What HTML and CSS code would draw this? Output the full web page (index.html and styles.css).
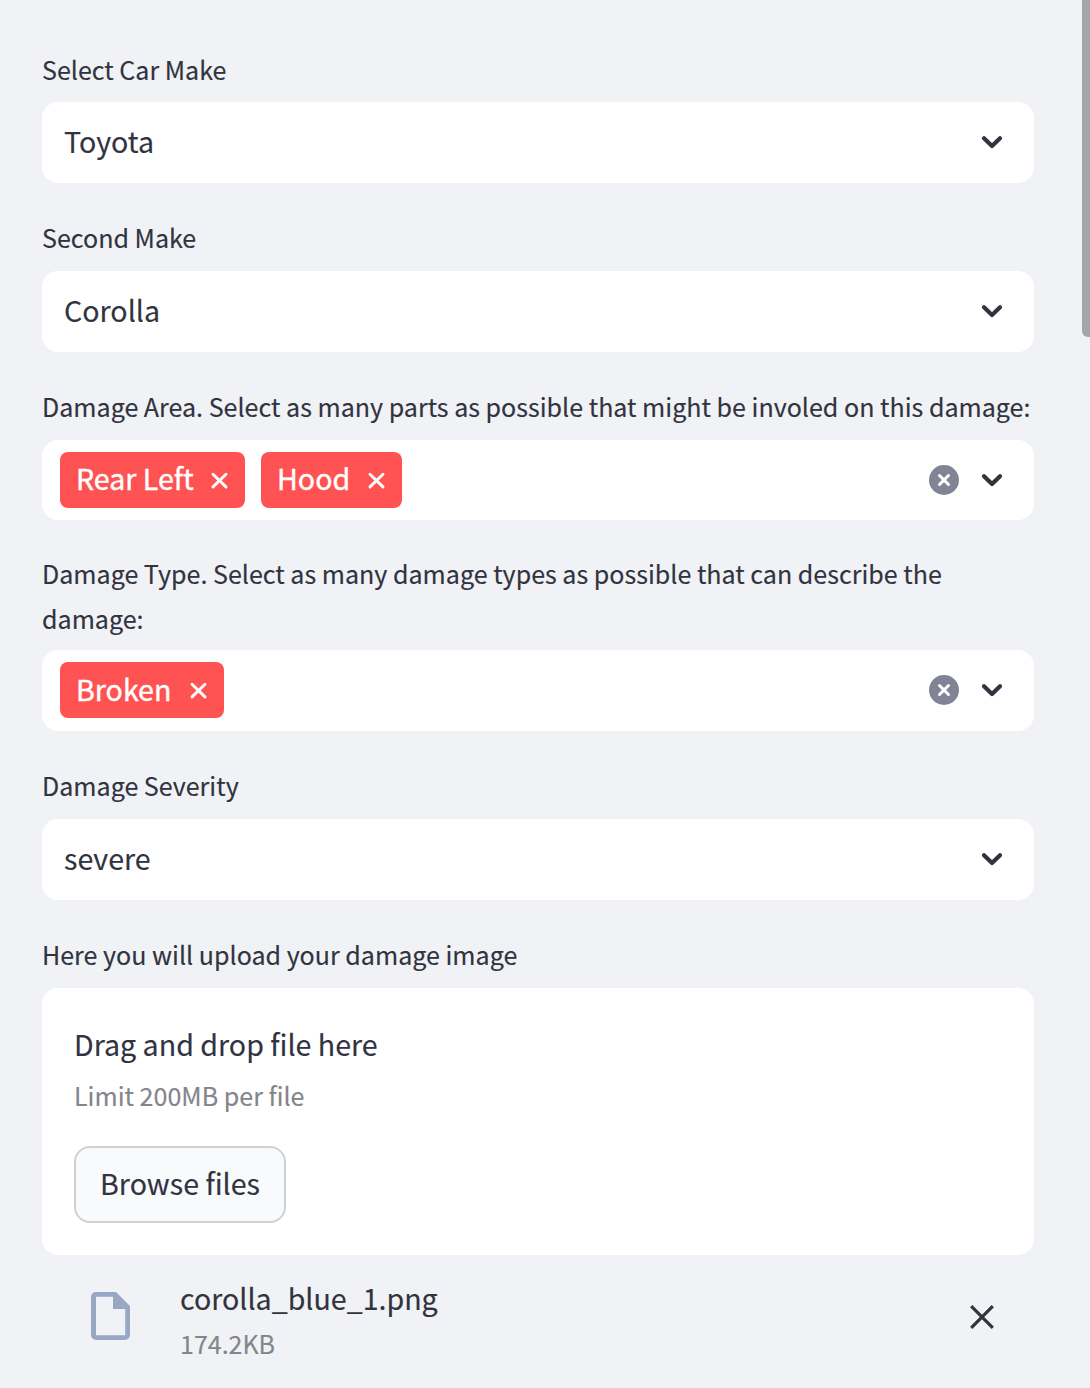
FILE: index.html
```html
<!DOCTYPE html>
<html lang="en">
<head>
<meta charset="utf-8">
<title>Damage report</title>
<link rel="stylesheet" href="styles.css">
</head>
<body>
<svg class="defs" width="0" height="0" aria-hidden="true">
  <symbol id="chevron" viewBox="0 0 32 32"><path d="M8 12.2l8 7.8 8-7.8" fill="none" stroke="currentColor" stroke-width="4.2" stroke-linecap="round" stroke-linejoin="round"/></symbol>
  <symbol id="cross" viewBox="0 0 20 20"><path d="M4 4.3l13 12.6M17 4.3l-13 12.6" fill="none" stroke="currentColor" stroke-width="2.9" stroke-linecap="round"/></symbol>
  <symbol id="clear" viewBox="0 0 30 30"><circle cx="15" cy="15" r="15" fill="#808495"/><path d="M10.5 10.5l9 9M19.5 10.5l-9 9" stroke="#fff" stroke-width="3" stroke-linecap="round"/></symbol>
</svg>
<main class="sidebar">
  <form class="form">
    <div class="field">
      <div class="label"><span class="label-text">Select Car Make</span></div>
      <div class="select"><span class="value">Toyota</span><svg class="chevron"><use href="#chevron"/></svg></div>
    </div>
    <div class="field">
      <div class="label"><span class="label-text">Second Make</span></div>
      <div class="select"><span class="value">Corolla</span><svg class="chevron"><use href="#chevron"/></svg></div>
    </div>
    <div class="field">
      <div class="label"><span class="label-text">Damage Area. Select as many parts as possible that might be involed on this damage:</span></div>
      <div class="select multi">
        <div class="tags">
          <span class="tag tag-rear"><span class="tag-text">Rear Left</span><svg class="tag-x"><use href="#cross"/></svg></span>
          <span class="tag tag-hood"><span class="tag-text">Hood</span><svg class="tag-x"><use href="#cross"/></svg></span>
        </div>
        <svg class="clear"><use href="#clear"/></svg><svg class="chevron"><use href="#chevron"/></svg>
      </div>
    </div>
    <div class="field">
      <div class="label label-long"><span class="label-text">Damage Type. Select as many damage types as possible that can describe the<br>damage:</span></div>
      <div class="select">
        <div class="tags">
          <span class="tag tag-broken"><span class="tag-text">Broken</span><svg class="tag-x"><use href="#cross"/></svg></span>
        </div>
        <svg class="clear"><use href="#clear"/></svg><svg class="chevron"><use href="#chevron"/></svg>
      </div>
    </div>
    <div class="field">
      <div class="label"><span class="label-text">Damage Severity</span></div>
      <div class="select"><span class="value">severe</span><svg class="chevron"><use href="#chevron"/></svg></div>
    </div>
    <div class="field">
      <div class="label"><span class="label-text">Here you will upload your damage image</span></div>
      <div class="dropzone">
        <div class="drop-title">Drag and drop file here</div>
        <div class="drop-hint">Limit 200MB per file</div>
        <button class="browse" type="button">Browse files</button>
      </div>
      <div class="file">
        <svg class="file-icon" viewBox="0 0 40 48"><path fill="#98a7c3" fill-rule="evenodd" d="M5 0H25L39 14V43a5 5 0 0 1-5 5H5a5 5 0 0 1-5-5V5a5 5 0 0 1 5-5zM5 4.8V43.3H34.2V17H22V4.8z"/></svg>
        <div class="file-info">
          <div class="file-name">corolla_blue_1.png</div>
          <div class="file-size">174.2KB</div>
        </div>
        <svg class="remove" viewBox="0 0 24 24"><path d="M1.2 1.2l21.6 21.6M22.8 1.2L1.2 22.8" stroke="currentColor" stroke-width="3.2"/></svg>
      </div>
    </div>
  </form>
  <div class="scrollbar"></div>
</main>
</body>
</html>
```
FILE: styles.css
```css
* { box-sizing: border-box; }
body {
  margin: 0;
  background: #f0f2f6;
  color: #31333f;
  font-family: "Noto Sans CJK SC", "Noto Sans", sans-serif;
  font-size: 28.6px;
  -webkit-text-stroke: 0.15px currentColor;
}
.defs { position: absolute; }
.sidebar {
  display: flex;
  justify-content: space-between;
  height: 1388px;
  overflow: hidden;
}
.form {
  display: flex;
  flex-direction: column;
  gap: 30px;
  width: 1034px;
  padding: 44px 0 0 42px;
}
.label {
  display: flex;
  align-items: center;
  min-height: 58px;
  padding-bottom: 10px;
  font-size: 25.06px;
  line-height: 45px;
  white-space: nowrap;
}
.field:first-child .label { padding-bottom: 8px; }
.label-long { padding: 1px 0 9px; }
.select {
  display: flex;
  align-items: center;
  height: 81px;
  padding: 0 26px 1px 18px;
  background: #fff;
  border-radius: 16px;
}
.multi { height: 80px; padding-bottom: 0; }
.value { flex: 1; padding: 0 0 3px 4px; line-height: 45px; }
.tags { display: flex; flex: 1; gap: 16px; }
.tag {
  display: flex;
  align-items: center;
  justify-content: space-between;
  height: 56px;
  padding: 0 16px;
  background: #ff5252;
  border-radius: 8px;
  color: #fff;
  line-height: 45px;
  white-space: nowrap;
  -webkit-text-stroke: 0.4px currentColor;
}
.tag-text { padding-bottom: 5px; }
.tag-rear { width: 185px; }
.tag-hood { width: 141px; }
.tag-broken { width: 164px; }
.tag-broken .tag-text { padding-bottom: 3px; }
.tag-x { width: 20px; height: 20px; flex: none; }
.clear { width: 30px; height: 30px; margin-right: 17px; }
.chevron { width: 32px; height: 32px; }
.dropzone {
  display: flex;
  flex-direction: column;
  align-items: flex-start;
  height: 267px;
  padding: 32px;
  background: #fff;
  border-radius: 16px;
}
.drop-title { height: 54px; line-height: 48px; }
.drop-hint { height: 72px; font-size: 25.05px; line-height: 43px; color: #83858c; }
.browse {
  width: 212px;
  height: 77px;
  padding: 0 0 4px;
  background: #f9fafc;
  border: 2px solid #d0d1d5;
  border-radius: 16px;
  color: inherit;
  font: inherit;
  line-height: 45px;
}
.file {
  display: flex;
  align-items: center;
  height: 122px;
  padding: 0 40px 0 49px;
}
.file-icon { width: 40px; height: 48px; margin-right: 49px; }
.file-info { flex: 1; padding-top: 6px; }
.file-name { line-height: 48px; }
.file-size { font-size: 25px; line-height: 43px; color: #83858c; }
.remove { width: 24px; height: 24px; margin-top: 2px; }
.scrollbar {
  width: 8px;
  height: 337px;
  background: #a5a6aa;
  border-bottom-left-radius: 6px;
}
```
